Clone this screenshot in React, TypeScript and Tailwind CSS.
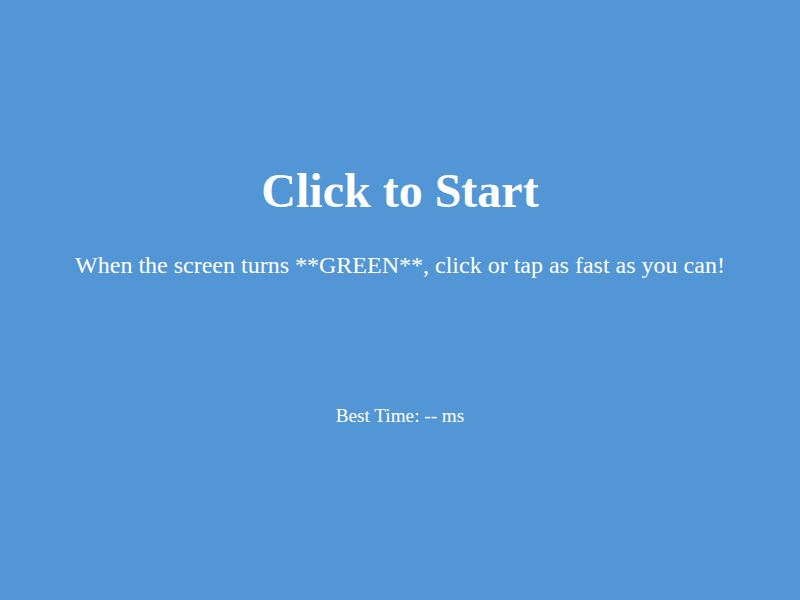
export default function App() {
  return (
    <div
      className="flex h-screen w-full flex-col items-center justify-center bg-[#5296d5] pb-[10px] text-center text-white select-none"
      style={{ fontFamily: '"Liberation Serif", "Times New Roman", serif' }}
    >
      <h1 className="mb-[34px] text-[48px] font-bold leading-[1.15]">Click to Start</h1>
      <p className="mb-[125px] text-[24px] leading-[1.15]">
        When the screen turns **GREEN**, click or tap as fast as you can!
      </p>
      <div className="text-[19.2px] leading-[1.15]">Best Time: -- ms</div>
    </div>
  );
}
